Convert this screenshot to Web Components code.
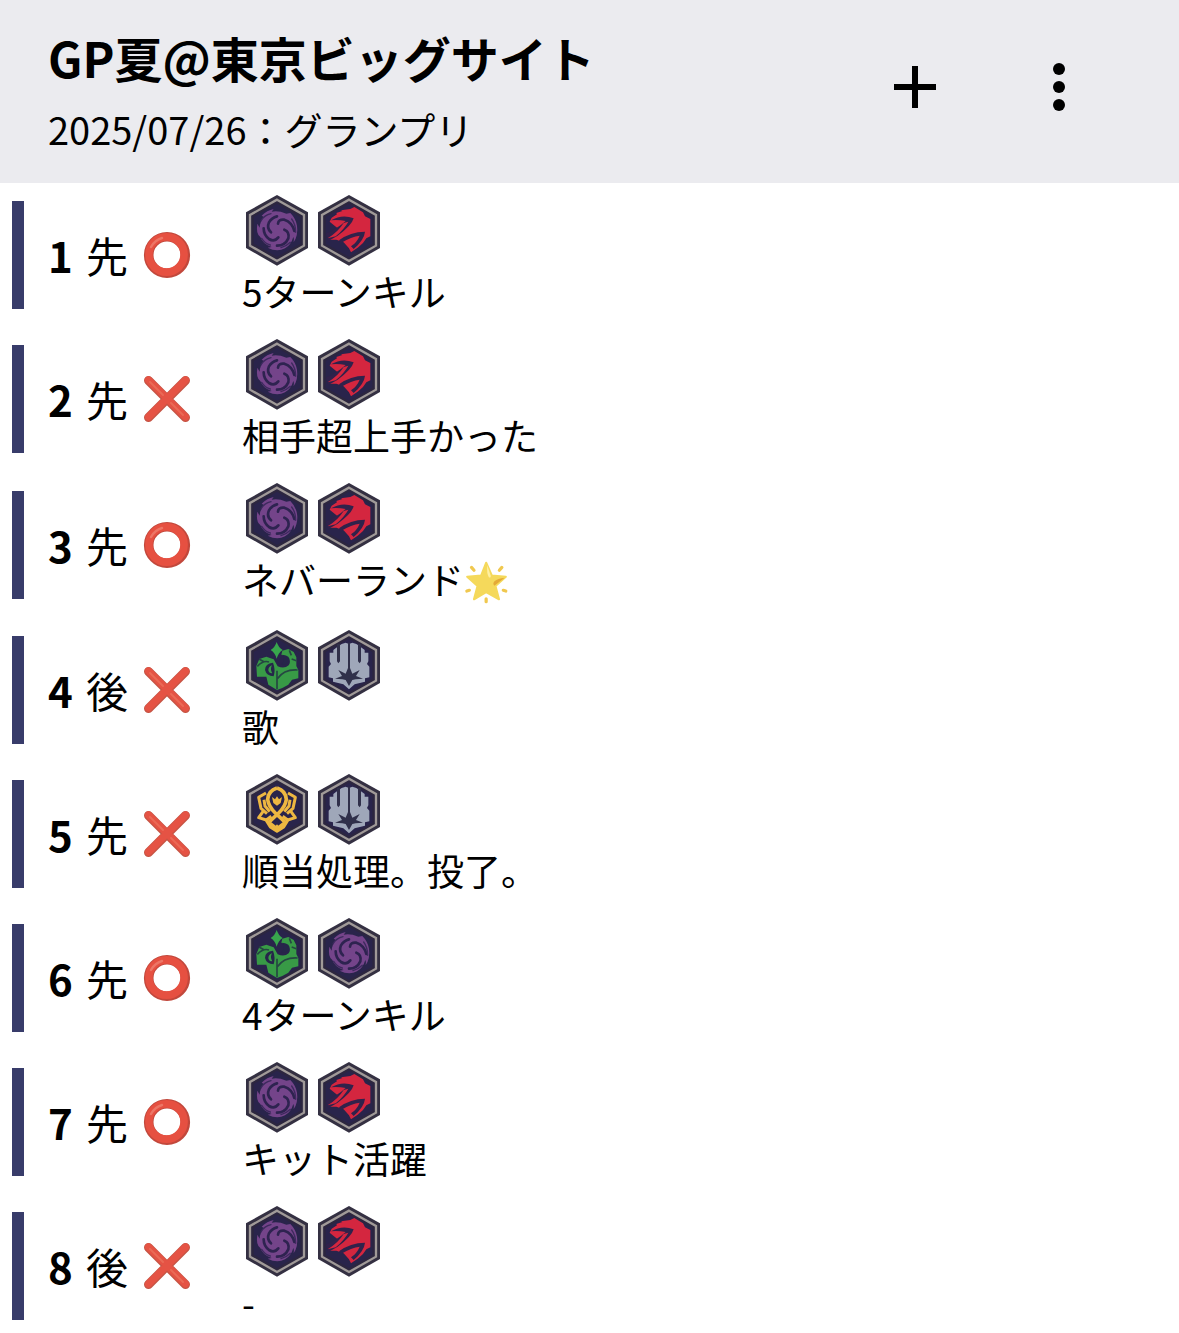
<!DOCTYPE html>
<html lang="ja">
<head>
<meta charset="utf-8">
<meta name="viewport" content="width=device-width, initial-scale=1">
<title>GP夏@東京ビッグサイト</title>
<style>
  body { margin: 0; background: #fff; color: #000; font-family: "Noto Sans CJK JP", "Noto Sans", sans-serif; }
</style>
</head>
<body>
<match-app></match-app>

<script>
const define = (name, cls) => customElements.define(name, cls);

/* Class emblems, drawn in a 216-unit hexagon box. */
const EMBLEMS = {
  abyss: { label: 'ナイトメア', art: `
    <path fill="#74448a" d="M62 62Q78 46 98 42L92 50Q112 46 136 56L148 54Q164 70 168 92Q172 120 158 142Q160 130 157 126Q150 150 132 160Q108 172 80 158L92 156Q66 148 58 126Q44 116 49 86L56 98Q56 82 69 66Z"/>
    <g fill="none" stroke="#2e2350" stroke-width="8" stroke-linecap="round">
      <path d="M111 86Q112 72 130 74Q154 82 160 108M130 104Q146 110 142 130Q132 152 108 152M112 127Q100 142 84 132Q68 120 68 100M90 112Q76 100 84 82Q92 68 108 64"/>
    </g>
    <path fill="none" stroke="#3d2a5e" stroke-width="4" stroke-linecap="round" d="M60 78Q70 60 90 56M152 72Q164 88 164 112M148 142Q136 154 120 158M62 130Q72 146 88 150"/>` },
  dragon: { label: 'ドラゴン', art: `
    <path fill="#d4263f" d="M56 68L72 58L70 54L88 48L84 46L112 42L124 36L150 52L156 64L172 72V124L160 130L150 144L134 158L114 172L108 160L92 142L70 134H46L60 124L74 100L50 80Z"/>
    <path fill="#30224b" d="M54 76Q88 56 122 70Q116 92 74 122L46 138L38 116Q74 100 98 78Q76 74 54 76Z"/>
    <path fill="#d4263f" d="M44 130Q76 110 92 84L106 80Q94 102 68 124Z"/>
    <path fill="#30224b" d="M78 136Q112 110 156 110Q154 134 122 162L114 154Q132 142 140 122Q116 124 84 144Z"/>` },
  forest: { label: 'エルフ', art: `
    <path fill="#38a64d" d="M107 36Q112 52 125 60Q112 68 107 86Q102 68 89 60Q102 52 107 36Z"/>
    <path fill="#389a46" d="M46 108L55 87L76 80L98 88L110 109Q130 118 143 106Q150 96 144 86Q136 77 121 74L124 62L142 57L158 66L166 82L166 108L172 120V145L153 149L142 164L124 174L108 180L82 164L76 140H48Z"/>
    <g fill="#26264a"><path d="M96 98Q72 100 72 120Q76 137 98 139Q104 118 96 98Z"/><path d="M124 74Q149 76 145 93Q139 107 122 102Q132 91 124 74Z"/></g>
    <path fill="#389a46" d="M93 106Q82 110 82 121Q84 131 94 130Q86 118 93 106Z"/>
    <path fill="none" stroke="#254742" stroke-width="5" d="M49 109Q67 90 84 96M108 122V178M109 146Q130 117 170 120M54 87L70 96M145 61L151 76M152 87L166 92"/>` },
  portal: { label: 'ネメシス', art: `
    <path fill="#9fa7b9" d="M86 42L98 38L108 42L118 38L130 42L142 50L155 60V68H166V94L162 102L169 110V142L156 145V155L125 163L108 178L91 163L60 155V145L47 142V110L54 102L50 94V68H61V60L74 50Z"/>
    <path fill="#30304a" d="M72 42H81V94L76 100L72 94ZM135 42H144V94L140 100L135 94ZM105 38H111V114L118 131L140 120L129 138L150 146L128 148L118 150L108 168L98 150L88 148L66 146L87 138L76 120L98 131L105 114Z"/>` },
  royal: { label: 'ロイヤル', art: `
    <g fill="none" stroke="#edb741" stroke-linejoin="round">
      <path stroke-width="11" d="M108 42Q82 50 80 76Q82 96 103 117L133 145L113 161M108 42Q134 50 136 76Q134 96 113 117L83 145L103 161"/>
      <path stroke-width="9" d="M75 57L53 70L60 103L78 119M141 57L163 70L156 103L138 119M69 77L72 96L86 113M147 77L144 96L130 113M68 110L53 131L76 138L91 127M148 110L163 131L140 138L125 127M75 138L88 159L108 172L128 159L141 138"/>
      <path fill="#edb741" stroke="none" d="M93 69L102 76L108 67L114 76L123 69L119 87L108 95L97 87ZM108 151L117 161L108 171L99 161Z"/>
    </g>` },
};

class ClassEmblem extends HTMLElement {
  connectedCallback() {
    const { label, art } = EMBLEMS[this.getAttribute('kind')];
    this.attachShadow({ mode: 'open' }).innerHTML = `
      <style>:host{display:block;width:72px;height:72px} svg{display:block;width:100%;height:100%}</style>
      <svg viewBox="0 0 216 216" role="img" aria-label="${label}">
        <path fill="#343042" d="M108 0L201 52V159L108 212L15 159V52Z"/>
        <path fill="#2c263f" stroke="#a09a98" stroke-width="7" d="M108 14L189 60V152L108 198L27 152V60Z"/>
        <path fill="#29244b" d="M108 26L178 66V146L108 186L38 146V66Z"/>
        ${art}
      </svg>`;
  }
}
define('class-emblem', ClassEmblem);

/* Win ring or loss cross. */
class ResultMark extends HTMLElement {
  connectedCallback() {
    const win = this.getAttribute('kind') === 'win';
    const art = win
      ? `<circle cx="24" cy="24" r="18.300" fill="none" stroke="#c2483c" stroke-width="9.600"/>
         <circle cx="23.500" cy="23.500" r="17.600" fill="none" stroke="#e65041" stroke-width="7.600"/>
         <path d="M8 16Q12 9 19 7" fill="none" stroke="#ec7666" stroke-width="2.500" stroke-linecap="round"/>`
      : `<g fill="none" stroke-linecap="round">
         <path d="M5.500 5.500L42.500 42.500M42.500 5.500L5.500 42.500" stroke="#c75545" stroke-width="9"/>
         <path d="M5.500 5L42.500 42M42.500 5L5.500 42" stroke="#e55344" stroke-width="7"/>
         <path d="M7 7L20 20M28 28L40 40" stroke="#ea6a56" stroke-width="2"/></g>`;
    this.attachShadow({ mode: 'open' }).innerHTML = `
      <style>:host{display:block;width:48px;height:48px} svg{display:block}</style>
      <svg width="48" height="48" viewBox="0 0 48 48" role="img" aria-label="${win ? '勝ち' : '負け'}">${art}</svg>`;
  }
}
define('result-mark', ResultMark);

class GlowStar extends HTMLElement {
  connectedCallback() {
    this.attachShadow({ mode: 'open' }).innerHTML = `
      <style>:host{display:flex;align-items:flex-end;width:45px;height:51px} svg{display:block}</style>
      <svg width="45" height="45" viewBox="0 0 126 126" role="img" aria-label="輝く星">
        <path fill="#f5d95b" stroke="#f5d95b" stroke-width="6" stroke-linejoin="round" d="M62 5L78 41L117 44L88 70L98 107L62 87L28 107L38 70L9 44L48 41Z"/>
        <path fill="#fff0a2" d="M65 12L75 41Q76 47 70 46Q63 36 65 12Z"/>
        <path fill="#e4aa37" d="M114 47L85 69Q79 63 86 56Q94 50 114 47Z"/>
        <g stroke="#f0c84f" stroke-width="9" stroke-linecap="round"><path d="M21 18L28 26M106 18L99 26M8 84L15 82M110 82L117 84M62 106V114"/></g>
      </svg>`;
  }
}
define('glow-star', GlowStar);

class AppHeader extends HTMLElement {
  connectedCallback() {
    this.attachShadow({ mode: 'open' }).innerHTML = `
      <style>
        :host{display:block}
        header{display:flex;align-items:flex-start;background:#ebebef;padding:15px 48px 24px}
        .titles{flex:1;min-width:0;padding-top:6px}
        h1{margin:0 0 6px;font-size:48px;line-height:72px;font-weight:700}
        p{margin:0;font-size:38px;line-height:60px}
        button{display:grid;place-items:center;flex:none;width:144px;height:144px;margin:0;padding:0;border:0;background:none;color:#000}
        svg{display:block}
      </style>
      <header>
        <div class="titles"><h1><slot name="title"></slot></h1><p><slot name="subtitle"></slot></p></div>
        <button type="button" aria-label="追加"><svg width="72" height="72" viewBox="0 0 24 24"><path d="M19 13h-6v6h-2v-6H5v-2h6V5h2v6h6z"/></svg></button>
        <button type="button" aria-label="メニュー"><svg width="72" height="72" viewBox="0 0 24 24"><circle cx="12" cy="6" r="2"/><circle cx="12" cy="12" r="2"/><circle cx="12" cy="18" r="2"/></svg></button>
      </header>`;
  }
}
define('app-header', AppHeader);

class MatchRow extends HTMLElement {
  connectedCallback() {
    const a = n => this.getAttribute(n);
    this.attachShadow({ mode: 'open' }).innerHTML = `
      <style>
        :host{display:flex;align-items:center;padding:0 12px}
        .bar{flex:none;width:12px;height:108px;background:#383c6a}
        .head{display:flex;align-items:center;flex:none;width:193px;padding-left:24px;box-sizing:content-box;font-size:42px;line-height:60px}
        .no{flex:none;width:38px;font-weight:700}
        .turn{flex:none;width:57px}
        .body{flex:1;min-width:0;padding:12px 0}
        .decks{display:flex}
        .note{display:flex;align-items:flex-start;padding-left:1px;font-size:37px;line-height:48px}
      </style>
      <div class="bar"></div>
      <div class="head"><span class="no">${a('no')}</span><span class="turn">${a('turn')}</span><result-mark kind="${a('result')}"></result-mark></div>
      <div class="body">
        <div class="decks">${a('decks').split(' ').map(k => `<class-emblem kind="${k}"></class-emblem>`).join('')}</div>
        <div class="note"><slot></slot></div>
      </div>`;
  }
}
define('match-row', MatchRow);

class MatchApp extends HTMLElement {
  connectedCallback() {
    const rows = [
      [1, '先', 'win', 'abyss dragon', '5ターンキル'],
      [2, '先', 'loss', 'abyss dragon', '相手超上手かった'],
      [3, '先', 'win', 'abyss dragon', 'ネバーランド<glow-star></glow-star>'],
      [4, '後', 'loss', 'forest portal', '歌'],
      [5, '先', 'loss', 'royal portal', '順当処理。投了。'],
      [6, '先', 'win', 'forest abyss', '4ターンキル'],
      [7, '先', 'win', 'abyss dragon', 'キット活躍'],
      [8, '後', 'loss', 'abyss dragon', '-'],
    ];
    this.attachShadow({ mode: 'open' }).innerHTML = `
      <style>:host{display:block} ul{list-style:none;margin:0;padding:0}</style>
      <app-header><span slot="title">GP夏@東京ビッグサイト</span><span slot="subtitle">2025/07/26：グランプリ</span></app-header>
      <main><ul>${rows.map(([no, turn, result, decks, note]) =>
        `<li><match-row no="${no}" turn="${turn}" result="${result}" decks="${decks}">${note}</match-row></li>`).join('')}</ul></main>`;
  }
}
define('match-app', MatchApp);
</script>
</body>
</html>
